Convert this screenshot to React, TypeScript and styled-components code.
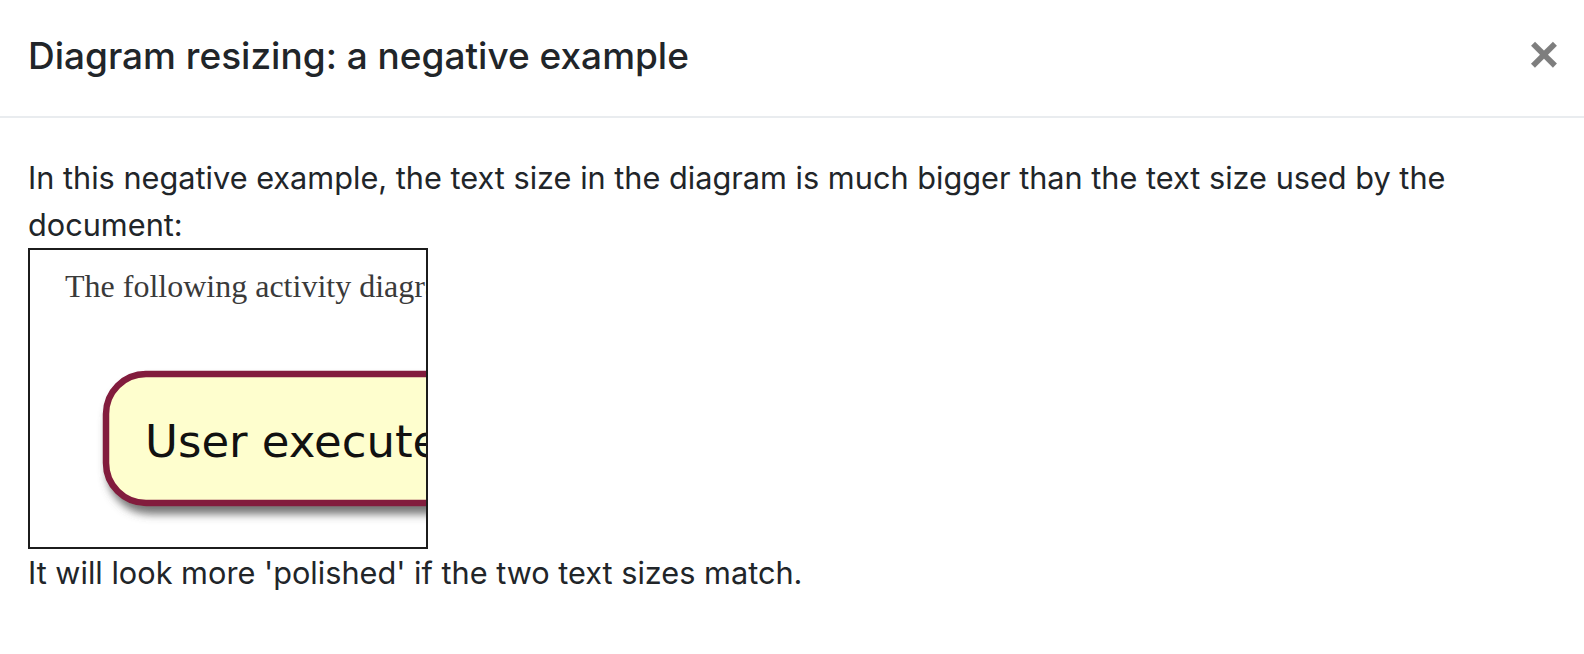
import styled, { createGlobalStyle } from 'styled-components';

const GlobalStyle = createGlobalStyle`
  html, body {
    margin: 0;
    padding: 0;
    background: #fff;
  }
  body {
    font-family: Inter, "Liberation Sans", Arial, sans-serif;
    color: #212529;
  }
`;

function ActivityDiagramCrop() {
  return (
    <svg width="396" height="297" viewBox="0 0 396 297">
      <defs>
        <filter id="nodeShadow" x="-20%" y="-20%" width="140%" height="160%">
          <feDropShadow dx="4" dy="8" stdDeviation="4" floodColor="#555" floodOpacity="0.8" />
        </filter>
      </defs>
      <rect width="396" height="297" fill="#fff" />
      <text
        x="35"
        y="47"
        fontFamily='"Liberation Serif", "Times New Roman", serif'
        fontSize="32"
        fill="#3a3a3a"
      >
        The following activity diagram shows
      </text>
      <rect
        x="76"
        y="124"
        width="600"
        height="129"
        rx="40"
        ry="40"
        fill="#fefece"
        stroke="#821a3c"
        strokeWidth="6.5"
        filter="url(#nodeShadow)"
      />
      <text
        x="115"
        y="207"
        fontFamily='"DejaVu Sans", Verdana, sans-serif'
        fontSize="45"
        fill="#111"
      >
        User executes
      </text>
    </svg>
  );
}

export default function App() {
  return (
    <>
      <GlobalStyle />
      <Modal>
        <Header>
          <Title>Diagram resizing: a negative example</Title>
          <CloseButton type="button" aria-label="Close">
            ×
          </CloseButton>
        </Header>
        <Body>
          <Paragraph>
            In this negative example, the text size in the diagram is much bigger than the text size used by the
            document:
          </Paragraph>
          <Figure>
            <ActivityDiagramCrop />
          </Figure>
          <Paragraph>It will look more 'polished' if the two text sizes match.</Paragraph>
        </Body>
      </Modal>
    </>
  );
}

/* ---- styled ---- */

const Modal = styled.div`
  width: 1584px;
  height: 654px;
  background: #fff;
  overflow: hidden;
`;

const Header = styled.div`
  display: flex;
  align-items: center;
  justify-content: space-between;
  height: 118px;
  padding: 0 25px 0 28px;
  box-sizing: border-box;
  border-bottom: 2px solid #e9ecef;
`;

const Title = styled.h5`
  margin: 0;
  font-size: 37px;
  font-weight: 500;
  line-height: 1.5;
  color: #212529;
  padding-bottom: 4px;
`;

const CloseButton = styled.button`
  border: 0;
  background: transparent;
  padding: 0;
  margin: 0 0 8px 0;
  font-family: "Liberation Sans", Arial, sans-serif;
  font-size: 52px;
  font-weight: 700;
  line-height: 1;
  color: #000;
  opacity: 0.5;
  cursor: pointer;
`;

const Body = styled.div`
  padding: 36px 28px 0;
`;

const Paragraph = styled.p`
  margin: 0;
  font-size: 30.7px;
  line-height: 47px;
  color: #212529;
  max-width: 1460px;
`;

const Figure = styled.div`
  width: 396px;
  height: 297px;
  border: 2px solid #1c1c1c;
  overflow: hidden;
  line-height: 0;
`;
